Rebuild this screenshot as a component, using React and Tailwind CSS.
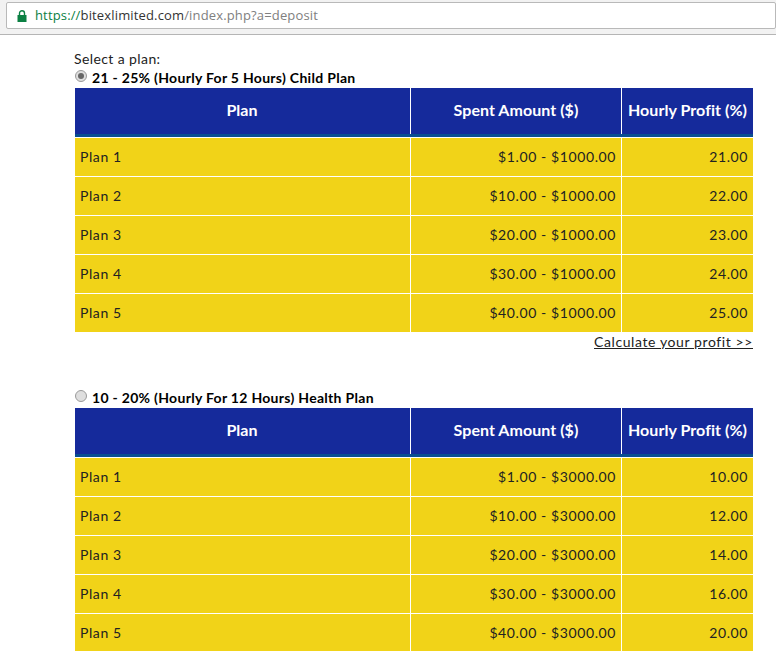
const planA = [
  ['Plan 1', '$1.00 - $1000.00', '21.00'],
  ['Plan 2', '$10.00 - $1000.00', '22.00'],
  ['Plan 3', '$20.00 - $1000.00', '23.00'],
  ['Plan 4', '$30.00 - $1000.00', '24.00'],
  ['Plan 5', '$40.00 - $1000.00', '25.00'],
];

const planB = [
  ['Plan 1', '$1.00 - $3000.00', '10.00'],
  ['Plan 2', '$10.00 - $3000.00', '12.00'],
  ['Plan 3', '$20.00 - $3000.00', '14.00'],
  ['Plan 4', '$30.00 - $3000.00', '16.00'],
  ['Plan 5', '$40.00 - $3000.00', '20.00'],
];

function PadlockIcon() {
  return (
    <svg width="10" height="12" viewBox="0 0 10 12" className="mr-[8px]">
      <path d="M2.5 5V3.2a2.5 2.5 0 0 1 5 0V5" fill="none" stroke="#0b8043" strokeWidth="1.4" />
      <rect x="0.5" y="5" width="9" height="7" fill="#0b8043" />
    </svg>
  );
}

function PlanTable({ rows }) {
  return (
    <div className="w-[678px] ml-[75px] text-[14px] tracking-[0.6px] text-[#222]">
      <div className="flex h-[49px] bg-[#152a9b] border-b-[3px] border-[#0a4e91] text-white text-[16px] font-bold tracking-[0.05px]">
        <div className="w-[335px] flex items-center justify-center pb-[2px] pr-[1px]">Plan</div>
        <div className="w-[211px] border-l border-white flex items-center justify-center pb-[2px]">Spent Amount ($)</div>
        <div className="flex-1 border-l border-white flex items-center justify-center pb-[2px] whitespace-nowrap">Hourly Profit (%)</div>
      </div>
      {rows.map((r) => (
        <div key={r[0]} className="flex h-[39px] bg-[#f1d318] border-t border-white">
          <div className="w-[335px] flex items-center pl-[5px] pb-[2px]">{r[0]}</div>
          <div className="w-[211px] border-l border-white flex items-center justify-end pr-[5px] pb-[2px]">{r[1]}</div>
          <div className="flex-1 border-l border-white flex items-center justify-end pr-[5px] pb-[2px]">{r[2]}</div>
        </div>
      ))}
    </div>
  );
}

function PlanTitle({ checked, label }) {
  return (
    <div className="flex items-center h-[18px] mb-[2px] ml-[75px] text-[14px] font-bold tracking-[0.3px] text-black">
      <span className="w-[12px] h-[12px] rounded-full border border-[#9a9a9a] bg-[#dedede] flex items-center justify-center mr-[5px] -mt-[3px]">
        {checked && <span className="w-[6px] h-[6px] rounded-full bg-[#666]" />}
      </span>
      {label}
    </div>
  );
}

export default function App() {
  return (
    <div className="w-[776px] h-[651px] overflow-hidden bg-white font-['Lato','Liberation_Sans',sans-serif]">
      <div className="h-[35px] bg-[#f2f2f2] border-b border-[#b5b5b5] pt-[2px] pl-[6px]">
        <div className="h-[27px] bg-white border border-[#b9b9b9] rounded-[2px] flex items-center pl-[10px] text-[13px] tracking-[0.15px] font-['Open_Sans','Liberation_Sans',sans-serif]">
          <PadlockIcon />
          <span className="text-[#0b8043]">https://</span>
          <span className="text-[#333]">bitexlimited.com</span>
          <span className="text-[#808080]">/index.php?a=deposit</span>
        </div>
      </div>
      <div className="pt-[15px]">
        <div className="ml-[74px] h-[18px] text-[14px] leading-[18px] tracking-[0.4px] text-[#222]">Select a plan:</div>
        <PlanTitle checked label="21 - 25% (Hourly For 5 Hours) Child Plan" />
        <PlanTable rows={planA} />
        <div className="w-[753px] h-[20px] mb-[36px] text-right text-[14px] leading-[20px] tracking-[0.6px] underline text-[#222]">Calculate your profit &gt;&gt;</div>
        <PlanTitle label="10 - 20% (Hourly For 12 Hours) Health Plan" />
        <PlanTable rows={planB} />
      </div>
    </div>
  );
}
